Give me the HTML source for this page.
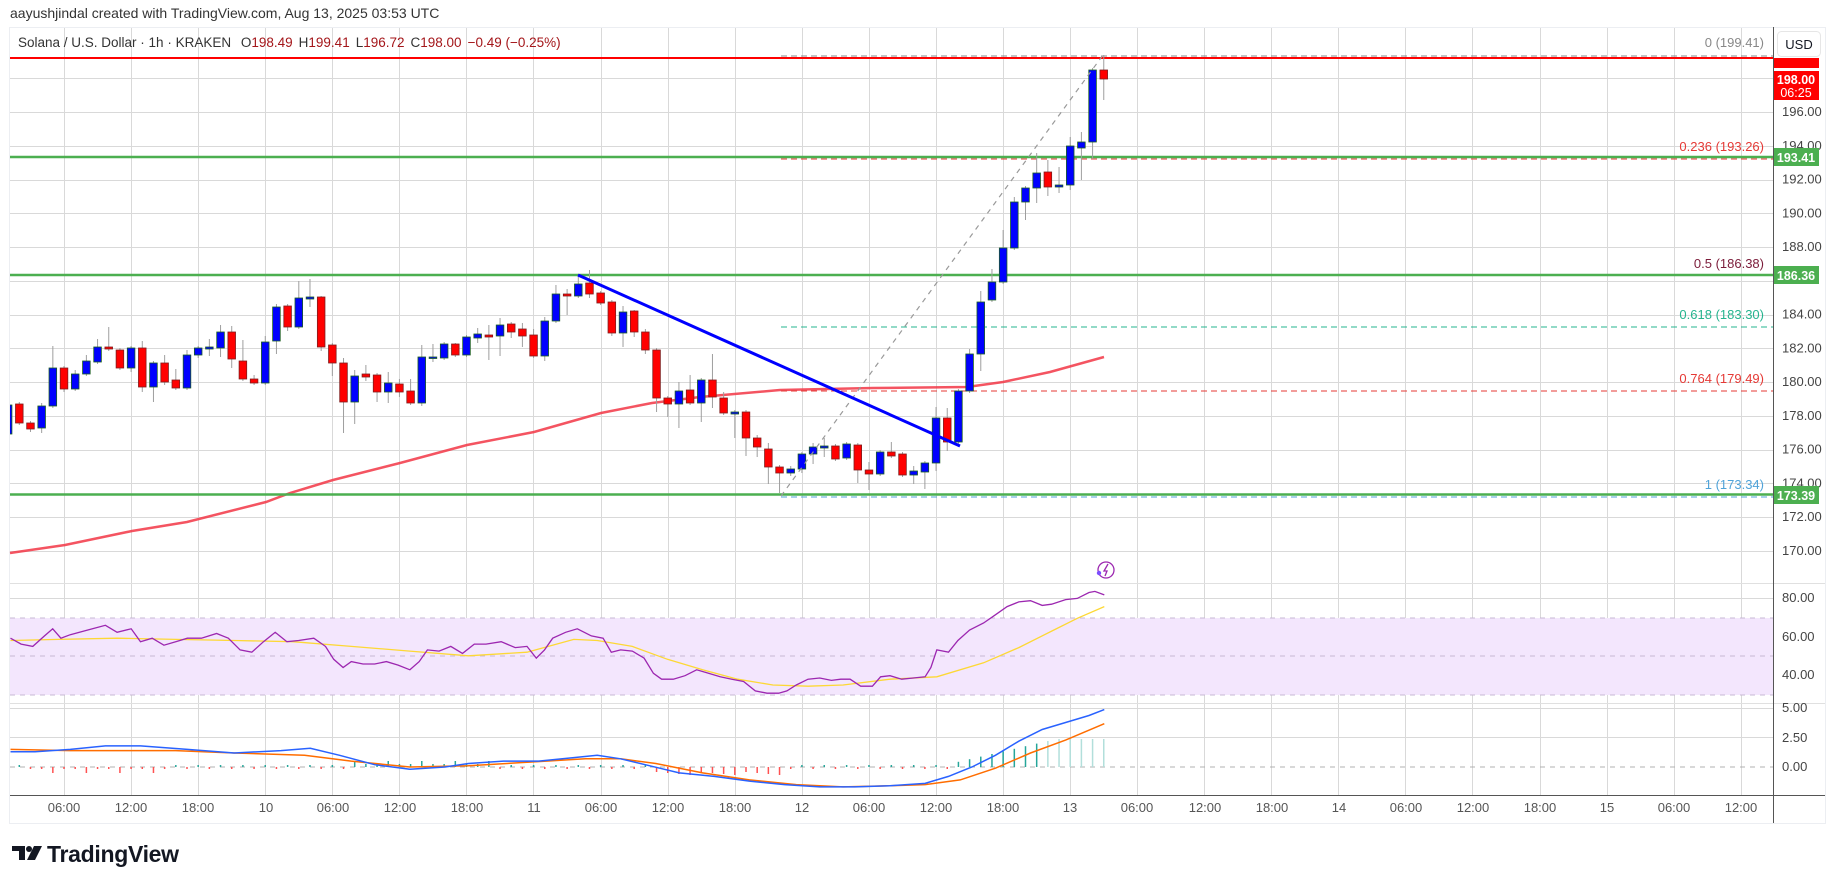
<!DOCTYPE html>
<html><head><meta charset="utf-8">
<style>
html,body{margin:0;padding:0;background:#fff;width:1835px;height:883px;overflow:hidden;font-family:"Liberation Sans",sans-serif;}
#hdr{position:absolute;left:10px;top:5px;font-size:14px;color:#333;}
#svg{position:absolute;left:0;top:0;}
#logo{position:absolute;left:12px;top:841px;font-size:23px;font-weight:bold;color:#131722;letter-spacing:-0.3px;}
</style></head><body>
<div id="hdr">aayushjindal created with TradingView.com, Aug 13, 2025 03:53 UTC</div>
<svg id="svg" width="1835" height="883" xmlns="http://www.w3.org/2000/svg" font-family="Liberation Sans, sans-serif">
<rect x="9.5" y="27.5" width="1816" height="796" fill="#fff" stroke="#eceef2"/>
<g id="grid" stroke="#d9d9d9" stroke-width="1"></g>
<!-- RSI band -->
<rect x="10" y="618" width="1763" height="77" fill="#f3e6fd"/>
<g stroke="#c7b8d4" stroke-width="1" stroke-dasharray="5,5">
<line x1="10" y1="618" x2="1773" y2="618"/><line x1="10" y1="656" x2="1773" y2="656"/><line x1="10" y1="695" x2="1773" y2="695"/>
</g>
<line x1="10" y1="767" x2="1773" y2="767" stroke="#b0b0b0" stroke-dasharray="5,5"/>
<line x1="10" y1="583.5" x2="1825" y2="583.5" stroke="#e0e0e0"/>
<line x1="10" y1="703.5" x2="1825" y2="703.5" stroke="#e0e0e0"/>
<!-- MA -->
<polyline fill="none" stroke="#f23645" stroke-width="2.5" stroke-opacity="0.85" points="10,553 65,545 132,531 187,522 266,502 290,493 333,480 400,463 467,445 534,432 601,413 652,403 700,397 780,390 873,388 967,387 1003,382 1050,372 1104,357"/>
<!-- horizontal levels -->
<line x1="781" y1="56" x2="1773" y2="56" stroke="#888" stroke-dasharray="6,4"/>
<line x1="781" y1="159" x2="1773" y2="159" stroke="#e53935" stroke-dasharray="6,4"/>
<line x1="781" y1="327" x2="1773" y2="327" stroke="#26b48f" stroke-dasharray="6,4"/>
<line x1="781" y1="391" x2="1773" y2="391" stroke="#e53935" stroke-dasharray="6,4"/>
<line x1="781" y1="497" x2="1773" y2="497" stroke="#4fa3d9" stroke-dasharray="6,4"/>
<line x1="10" y1="58" x2="1773" y2="58" stroke="#ff0000" stroke-width="2"/>
<line x1="10" y1="157" x2="1773" y2="157" stroke="#4caf50" stroke-width="2.5"/>
<line x1="10" y1="275" x2="1773" y2="275" stroke="#4caf50" stroke-width="2.5"/>
<line x1="10" y1="494.5" x2="1773" y2="494.5" stroke="#4caf50" stroke-width="2.5"/>
<g font-size="13" text-anchor="end">
<text x="1764" y="47" fill="#888">0 (199.41)</text>
<text x="1764" y="151" fill="#e53935">0.236 (193.26)</text>
<text x="1764" y="268" fill="#7b1c3a">0.5 (186.38)</text>
<text x="1764" y="319" fill="#26b48f">0.618 (183.30)</text>
<text x="1764" y="383" fill="#e53935">0.764 (179.49)</text>
<text x="1764" y="489" fill="#4fa3d9">1 (173.34)</text>
</g>
<g id="candles"></g>
<line x1="781" y1="496" x2="1103" y2="55" stroke="#999" stroke-width="1.2" stroke-dasharray="5,5"/>
<line x1="578" y1="275" x2="960" y2="446" stroke="#0000ff" stroke-width="3"/>
<!-- RSI -->
<polyline id="rsima" fill="none" stroke="#fdd835" stroke-width="1.3"/>
<polyline id="rsi" fill="none" stroke="#9c27b0" stroke-width="1.3"/>
<g id="hist"></g>
<polyline id="sig" fill="none" stroke="#ff6d00" stroke-width="1.5"/>
<polyline id="macd" fill="none" stroke="#2962ff" stroke-width="1.5"/>
<!-- icon -->
<circle cx="1106" cy="570" r="8" fill="#fff" stroke="#9c27b0" stroke-width="1.3"/>
<path d="M1108 564 L1104 571 L1107 571 L1105 576" fill="none" stroke="#9c27b0" stroke-width="1.3"/>
<circle cx="1099" cy="573" r="2.2" fill="#7c4dff"/>
<!-- axes -->
<line x1="1773.5" y1="27" x2="1773.5" y2="823" stroke="#555"/>
<line x1="10" y1="795.5" x2="1825" y2="795.5" stroke="#555"/>
<g id="plabels" font-size="13" fill="#444"></g>
<g font-size="13" fill="#444">
<text x="1782" y="602">80.00</text><text x="1782" y="641">60.00</text><text x="1782" y="679">40.00</text>
<text x="1782" y="712">5.00</text><text x="1782" y="742">2.50</text><text x="1782" y="771">0.00</text>
</g>
<rect x="1777.5" y="31.5" width="43" height="25" rx="4" fill="#fff" stroke="#e6e6e6"/>
<text x="1799" y="49" font-size="13" fill="#131722" text-anchor="middle">USD</text>
<rect x="1774" y="58" width="45" height="10" fill="#ff0000"/>
<rect x="1774" y="71" width="45" height="29" fill="#ff0000"/>
<text x="1796" y="84" font-size="12.5" fill="#fff" font-weight="bold" text-anchor="middle">198.00</text>
<text x="1796" y="97" font-size="12.5" fill="#fff" text-anchor="middle">06:25</text>
<rect x="1774" y="148" width="45" height="18" fill="#4caf50"/>
<text x="1796" y="162" font-size="12.5" fill="#fff" font-weight="bold" text-anchor="middle">193.41</text>
<rect x="1774" y="266" width="45" height="18" fill="#4caf50"/>
<text x="1796" y="280" font-size="12.5" fill="#fff" font-weight="bold" text-anchor="middle">186.36</text>
<rect x="1774" y="486" width="45" height="18" fill="#4caf50"/>
<text x="1796" y="500" font-size="12.5" fill="#fff" font-weight="bold" text-anchor="middle">173.39</text>
<g font-size="13" fill="#555" text-anchor="middle">
<text x="64" y="812">06:00</text><text x="131" y="812">12:00</text><text x="198" y="812">18:00</text><text x="266" y="812">10</text>
<text x="333" y="812">06:00</text><text x="400" y="812">12:00</text><text x="467" y="812">18:00</text><text x="534" y="812">11</text>
<text x="601" y="812">06:00</text><text x="668" y="812">12:00</text><text x="735" y="812">18:00</text><text x="802" y="812">12</text>
<text x="869" y="812">06:00</text><text x="936" y="812">12:00</text><text x="1003" y="812">18:00</text><text x="1070" y="812">13</text>
<text x="1137" y="812">06:00</text><text x="1205" y="812">12:00</text><text x="1272" y="812">18:00</text><text x="1339" y="812">14</text>
<text x="1406" y="812">06:00</text><text x="1473" y="812">12:00</text><text x="1540" y="812">18:00</text><text x="1607" y="812">15</text>
<text x="1674" y="812">06:00</text><text x="1741" y="812">12:00</text>
</g>
<rect x="10" y="28" width="1763" height="28" fill="none"/>
<text x="18" y="47" font-size="13.5" fill="#333">Solana / U.S. Dollar · 1h · KRAKEN <tspan dx="6">O</tspan><tspan fill="#a4161a">198.49</tspan><tspan dx="6">H</tspan><tspan fill="#a4161a">199.41</tspan><tspan dx="6">L</tspan><tspan fill="#a4161a">196.72</tspan><tspan dx="6">C</tspan><tspan fill="#a4161a">198.00</tspan><tspan dx="6" fill="#a4161a">−0.49 (−0.25%)</tspan></text>
<!-- logo mark -->
<path d="M12 846 H25 V860 H19 V851 H12 Z" fill="#131722"/>
<circle cx="29" cy="849" r="3" fill="#131722"/>
<path d="M34 846 H42 L35 860 H27 Z" fill="#131722"/>
</svg>
<div id="logo" style="left:47px">TradingView</div>
<script>
var NS="http://www.w3.org/2000/svg";
function el(p,t,a){var e=document.createElementNS(NS,t);for(var k in a)e.setAttribute(k,a[k]);p.appendChild(e);return e;}
var g=document.getElementById('grid');
function py(p){return 112+(196-p)*16.88;}
for(var p=170;p<=198;p+=2){var y=Math.round(py(p))+0.5;el(g,'line',{x1:10,y1:y,x2:1773,y2:y});}
[598,637,675,708,737].forEach(function(y){el(g,'line',{x1:10,y1:y+0.5,x2:1773,y2:y+0.5});});
for(var k=0;k<26;k++){var x=Math.round(64+k*67.07)+0.5;el(g,'line',{x1:x,y1:28,x2:x,y2:795});}
var pl=document.getElementById('plabels');
for(var p=170;p<=196;p+=2){if(p==194||p==186||p==174)continue;var t=el(pl,'text',{x:1782,y:py(p)+4});t.textContent=p.toFixed(2);}
var t1=el(pl,'text',{x:1782,y:py(194)+4});t1.textContent='194.00';
var t2=el(pl,'text',{x:1782,y:py(174)+4});t2.textContent='174.00';
// candles: i, bodyTop, bodyBottom, wickTop, wickBottom, up(1)/down(0)
var C=[[-1,405,434,403,436,1],[0,404,423,402,425,0],[1,423,429,421,432,0],[2,406,428,403,433,1],[3,368,406,346,408,1],[4,368,389,366,392,0],[5,374,389,370,391,1],[6,361,374,355,376,1],[7,347,362,339,364,1],[8,347,349,327,351,0],[9,350,368,348,370,0],[10,348,368,346,372,1],[11,348,387,341,392,0],[12,363,387,361,402,1],[13,363,382,355,385,0],[14,380,388,369,390,0],[15,355,388,350,390,1],[16,348,355,346,358,1],[17,347,349,339,356,1],[18,332,348,325,357,1],[19,332,359,326,368,0],[20,361,379,340,381,0],[21,379,383,375,385,0],[22,342,383,336,385,1],[23,307,341,304,354,1],[24,306,327,304,331,0],[25,298,327,281,329,1],[26,297,299,279,307,1],[27,297,347,296,351,0],[28,345,363,343,376,0],[29,363,402,358,433,0],[30,376,402,370,424,1],[31,374,377,365,381,0],[32,375,392,373,402,0],[33,383,392,372,403,1],[34,384,392,379,397,0],[35,391,403,379,405,0],[36,357,403,345,406,1],[37,357,358,344,362,1],[38,344,358,342,360,1],[39,344,355,343,357,0],[40,337,355,335,357,1],[41,334,338,328,343,1],[42,335,337,325,360,0],[43,325,336,318,356,1],[44,324,332,322,338,0],[45,329,336,323,347,0],[46,335,356,329,358,0],[47,321,356,317,361,1],[48,294,321,285,323,1],[49,294,296,289,315,0],[50,284,296,275,298,1],[51,283,294,270,298,0],[52,293,303,291,305,0],[53,302,333,300,336,0],[54,312,333,306,347,1],[55,311,332,310,337,0],[56,332,350,329,354,0],[57,350,398,348,412,0],[58,398,404,396,417,0],[59,391,404,382,428,1],[60,390,403,375,405,0],[61,380,403,378,422,1],[62,380,397,354,408,0],[63,398,413,392,415,0],[64,412,414,410,438,1],[65,412,438,410,456,0],[66,438,447,435,457,0],[67,449,467,443,484,0],[68,467,473,465,493,0],[69,469,473,466,476,1],[70,454,469,452,473,1],[71,447,454,443,464,1],[72,446,448,438,457,1],[73,446,459,444,461,0],[74,444,458,442,460,1],[75,445,470,443,483,0],[76,470,474,462,490,0],[77,452,474,450,476,1],[78,452,456,442,458,0],[79,454,475,452,477,0],[80,471,475,466,484,1],[81,463,472,461,489,1],[82,418,463,407,471,1],[83,418,442,408,451,0],[84,391,442,389,444,1],[85,354,391,349,393,1],[86,302,354,291,371,1],[87,282,300,269,302,1],[88,248,282,230,284,1],[89,202,248,197,250,1],[90,188,202,186,220,1],[91,173,188,153,203,1],[92,172,187,160,196,0],[93,185,187,167,193,1],[94,146,185,137,190,1],[95,142,148,132,180,1],[96,70,142,68,159,1],[97,70,79,55,100,0]];
var cg=document.getElementById('candles');
C.forEach(function(c){var x=19.3+c[0]*11.18;
 el(cg,'line',{x1:x,y1:c[3],x2:x,y2:c[4],stroke:'#9e9e9e','stroke-width':1});
 var h=Math.max(c[2]-c[1],1.5);
 el(cg,'rect',{x:x-3.8,y:c[1],width:7.6,height:h,fill:c[5]?'#0000ff':'#ff0000',stroke:c[5]?'#1b5e20':'#7f1d1d','stroke-width':0.8});
});
var cp=document.createElementNS(NS,'clipPath');cp.id='cl';el(cp,'rect',{x:10,y:28,width:1763,height:767});document.getElementById('svg').appendChild(cp);
cg.setAttribute('clip-path','url(#cl)');
function pts(arr){return arr.map(function(p){return (p[0]*1.171).toFixed(1)+','+(p[1]*1.171).toFixed(1);}).join(' ');}
document.getElementById('rsi').setAttribute('points',pts([[9,545],[18,550],[28,552],[38,543],[45,537],[52,545],[60,542],[75,538],[90,534],[100,540],[112,537],[120,548],[130,545],[140,551],[150,548],[160,545],[172,545],[185,541],[195,545],[205,555],[215,557],[225,548],[235,540],[245,548],[255,547],[268,545],[278,552],[285,563],[293,570],[300,565],[310,567],[320,567],[330,565],[340,568],[350,572],[358,565],[365,555],[375,556],[385,552],[395,558],[405,550],[415,550],[428,548],[440,553],[450,552],[458,562],[465,555],[472,545],[483,540],[493,537],[505,543],[515,545],[522,557],[530,555],[540,556],[550,562],[558,575],[565,580],[575,580],[585,577],[595,572],[605,575],[615,578],[625,580],[635,582],[645,590],[655,592],[665,592],[672,590],[680,585],[690,580],[700,579],[710,581],[718,580],[726,580],[735,586],[745,586],[752,578],[760,577],[770,580],[780,579],[790,578],[795,570],[800,555],[810,557],[818,547],[828,538],[840,532],[850,525],[860,518],[870,514],[880,513],[890,517],[898,516],[910,512],[920,511],[930,506],[935,505],[943,508]]));
document.getElementById('rsima').setAttribute('points',pts([[9,547],[50,546],[100,545],[150,546],[200,547],[250,548],[300,552],[350,556],[400,560],[450,557],[490,546],[510,547],[540,552],[570,563],[600,572],[630,580],[660,585],[690,586],[720,585],[760,580],[800,578],[840,566],[870,553],[900,538],[920,528],[943,518]]));
document.getElementById('macd').setAttribute('points',pts([[9,642],[30,642],[60,640],[90,637],[120,637],[160,640],[200,643],[240,641],[265,639],[290,645],[320,653],[350,657],[380,655],[400,652],[430,650],[460,650],[490,647],[510,645],[530,648],[555,654],[580,660],[610,663],[640,667],[670,670],[700,672],[730,672],[760,671],[790,669],[810,663],[830,655],[850,645],[870,633],[890,623],[910,617],[930,611],[943,606]]));
document.getElementById('sig').setAttribute('points',pts([[9,640],[60,641],[100,641],[150,641],[200,643],[260,645],[300,650],[350,655],[400,654],[450,651],[500,648],[530,648],[560,652],[600,660],[640,666],[680,670],[720,672],[760,671],[790,670],[820,666],[850,656],[880,643],[910,632],[943,618]]));
var hg=document.getElementById('hist');
for(var i=0;i<98;i++){var x=19.3+i*11.18;var v=0;
 if(i>=84&&i<=97){v=-Math.min(28,(i-82)*2.6);} else if(i>=57&&i<=68){v=5+((i-57)%4);} else if(i>=30&&i<=42){v=-(i%3==0?6:3);} else if(i>=2&&i<=12){v=(i%3==0?6:2);} else v=(i%2?2:-2);
 var col=v<0?'#26a69a':'#ff5252'; if(i>=92)col='#b2dfdb';
 el(hg,'line',{x1:x,y1:767,x2:x,y2:767+v,stroke:col,'stroke-width':1.5});}
</script>
</body></html>
